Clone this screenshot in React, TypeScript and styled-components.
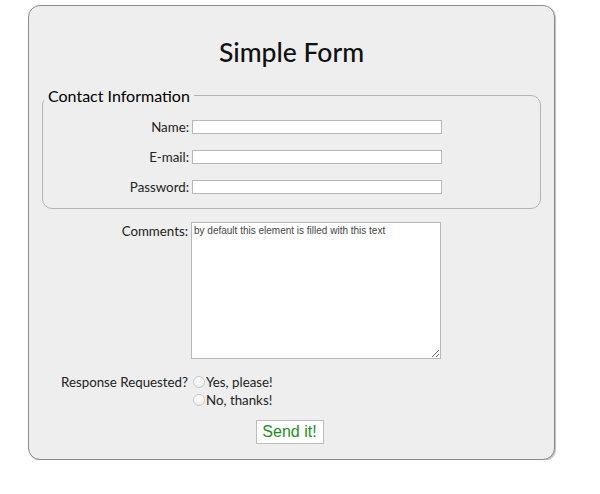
import React from "react";
import styled, { createGlobalStyle } from "styled-components";

const Global = createGlobalStyle`
  html, body { margin: 0; padding: 0; background: #ffffff; }
  body { font-family: Lato, "Noto Sans", sans-serif; color: #111; }
`;

const Page = styled.div`
  padding: 5px 0 0 28px;
`;

const Card = styled.form`
  box-sizing: border-box;
  width: 527px;
  height: 455px;
  background: #eeeeee;
  border: 1px solid #8a8a8a;
  border-radius: 12px;
  box-shadow: 1px 1px 1px rgba(0, 0, 0, 0.25);
  display: flex;
  flex-direction: column;
`;

const Title = styled.h1`
  margin: 30px 0 0 0;
  font-family: Lato, sans-serif;
  font-weight: 500;
  font-size: 26.5px;
  line-height: 32px;
  text-align: center;
  color: #111;
`;

const Fieldset = styled.fieldset`
  margin: 18px 13px 0 13px;
  padding: 15px 0 13px 0;
  border: 1px solid #b3b3b3;
  border-radius: 10px;
  display: flex;
  flex-direction: column;
  gap: 15px;
`;

const Legend = styled.legend`
  font-family: Lato, sans-serif;
  font-weight: 400;
  font-size: 16px;
  padding: 0 4px 0 4px;
  margin-left: 1px;
  color: #000;
`;

const Row = styled.div<{ $labelWidth: number; $top?: number }>`
  display: grid;
  grid-template-columns: ${(p) => p.$labelWidth}px auto;
  column-gap: 3px;
  align-items: start;
  margin-top: ${(p) => p.$top ?? 0}px;
`;

const Label = styled.label<{ $offset?: number }>`
  font-family: Lato, sans-serif;
  font-size: 13.3px;
  line-height: 15px;
  padding-top: ${(p) => p.$offset ?? 0}px;
  text-align: right;
  color: #222;
`;

const TextInput = styled.input`
  box-sizing: border-box;
  width: 250px;
  height: 14px;
  margin: 0;
  padding: 0 2px;
  background: #fff;
  border: 1px solid #b8b8b8;
  outline: none;
`;

const Comments = styled.textarea`
  box-sizing: border-box;
  width: 250px;
  height: 137px;
  margin: 0;
  padding: 2px 2px;
  background: #fff;
  border: 1px solid #b8b8b8;
  font-family: "Liberation Sans", Arial, sans-serif;
  font-size: 10px;
  line-height: 12px;
  color: #444;
  outline: none;
`;

const RadioGroup = styled.div`
  display: flex;
  flex-direction: column;
  gap: 4px;
`;

const RadioOption = styled.label`
  display: flex;
  align-items: center;
  font-family: Lato, sans-serif;
  font-size: 13.3px;
  line-height: 14px;
  color: #222;
`;

const Radio = styled.span`
  box-sizing: border-box;
  width: 12px;
  height: 12px;
  margin: 0 1px 0 2px;
  border-radius: 50%;
  border: 1px solid #c8c8c8;
  background: linear-gradient(#fdfdfd, #f0f0f0);
`;

const ButtonRow = styled.div`
  display: flex;
  justify-content: center;
  margin-top: 13px;
  padding-right: 4px;
`;

const SendButton = styled.button`
  box-sizing: border-box;
  width: 68px;
  height: 24px;
  padding: 0;
  background: #fff;
  border: 1px solid #bdbdbd;
  font-family: "Liberation Sans", Arial, sans-serif;
  font-size: 16px;
  color: #1e8c1e;
`;

export default function App() {
  return (
    <>
      <Global />
      <Page>
        <Card onSubmit={(e) => e.preventDefault()}>
          <Title>Simple Form</Title>
          <Fieldset>
            <Legend>Contact Information</Legend>
            <Row $labelWidth={146}>
              <Label>Name:</Label>
              <TextInput type="text" />
            </Row>
            <Row $labelWidth={146}>
              <Label>E-mail:</Label>
              <TextInput type="email" />
            </Row>
            <Row $labelWidth={146}>
              <Label>Password:</Label>
              <TextInput type="password" />
            </Row>
          </Fieldset>
          <Row $labelWidth={159} $top={13}>
            <Label $offset={2}>Comments:</Label>
            <Comments defaultValue="by default this element is filled with this text" />
          </Row>
          <Row $labelWidth={159} $top={16}>
            <Label>Response Requested?</Label>
            <RadioGroup>
              <RadioOption>
                <Radio />
                Yes, please!
              </RadioOption>
              <RadioOption>
                <Radio />
                No, thanks!
              </RadioOption>
            </RadioGroup>
          </Row>
          <ButtonRow>
            <SendButton type="submit">Send it!</SendButton>
          </ButtonRow>
        </Card>
      </Page>
    </>
  );
}
